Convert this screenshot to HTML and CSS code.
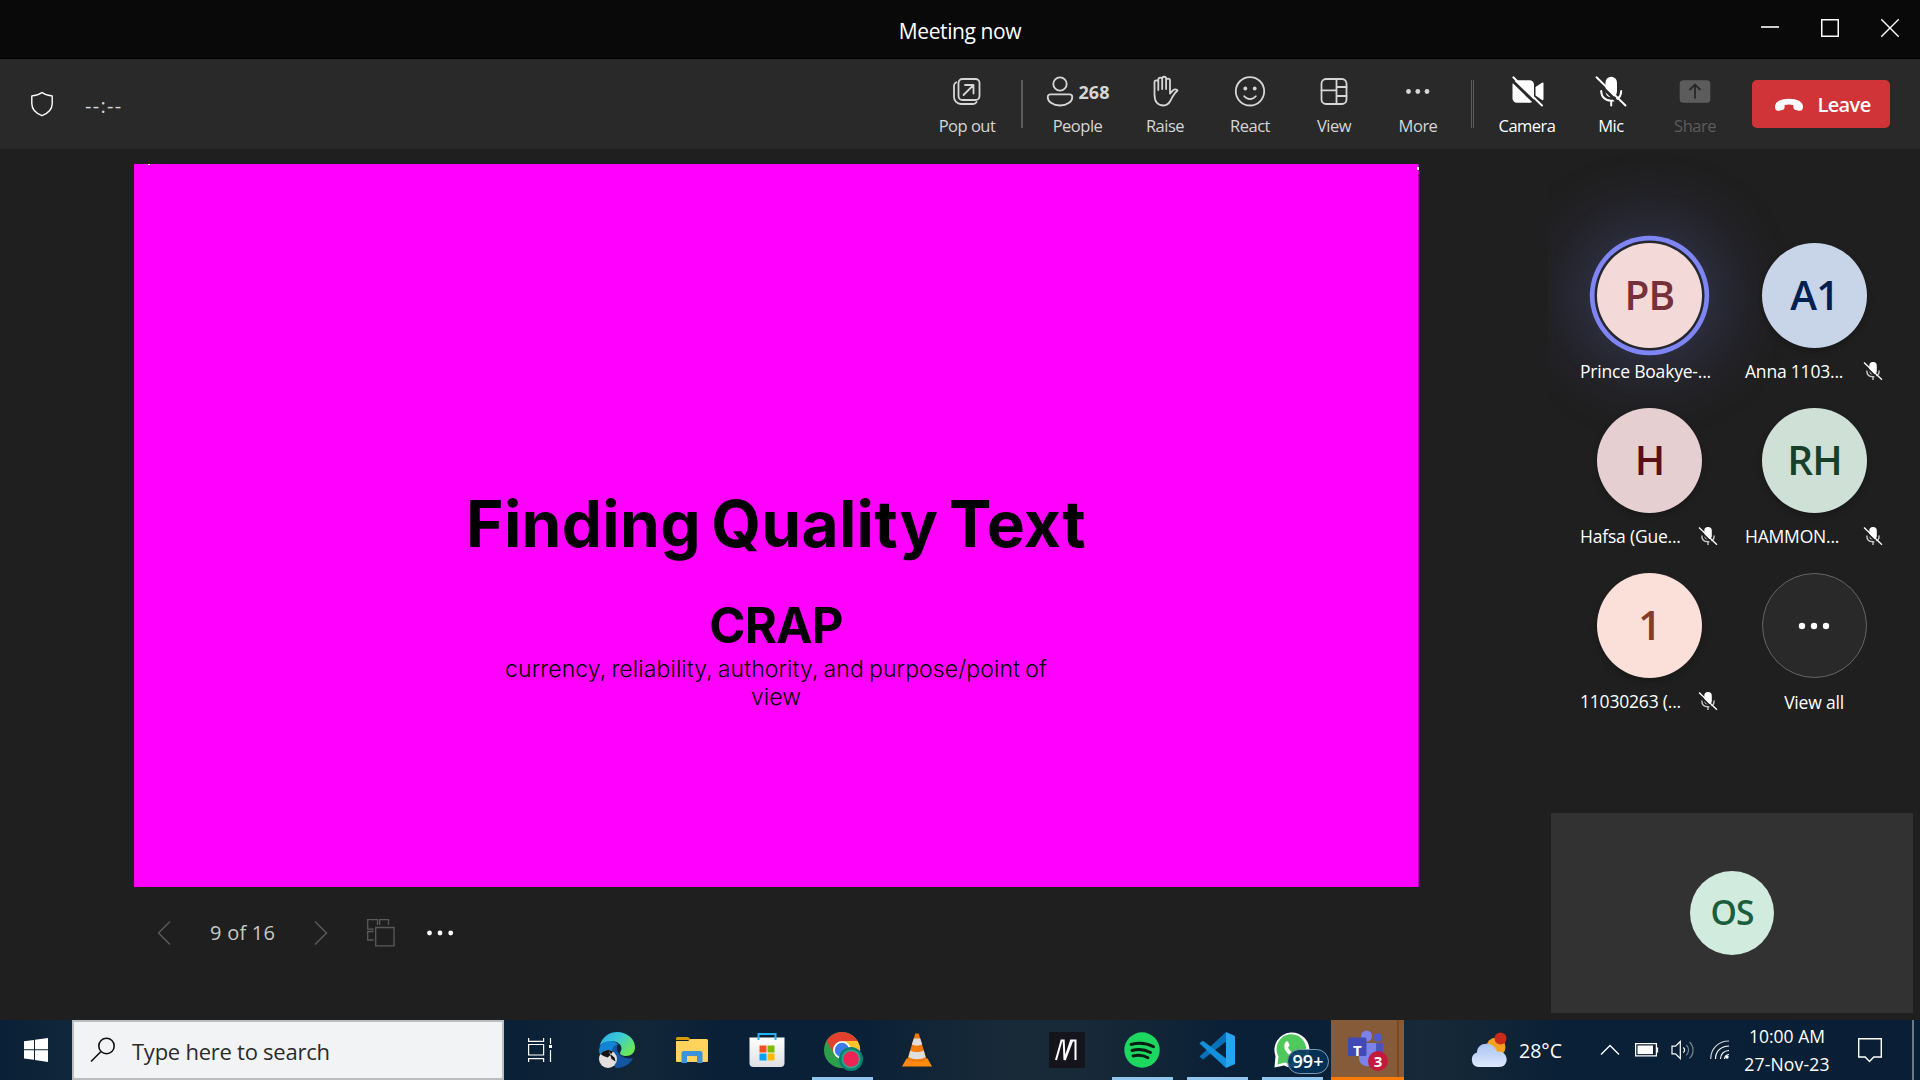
FILE: index.html
```html
<!DOCTYPE html>
<html lang="en">
<head>
<meta charset="utf-8">
<title>Meeting now</title>
<link rel="stylesheet" href="styles.css">
</head>
<body>
<header class="titlebar">
  <h1 class="title">Meeting now</h1>
  <div class="window-buttons">
    <svg width="18" height="18" viewBox="0 0 18 18"><path d="M0 8h18" stroke="#fff" stroke-width="1.6"/></svg>
    <svg width="18" height="18" viewBox="0 0 18 18"><path d="M.75.75h16.500v16.500H.75z" fill="none" stroke="#fff" stroke-width="1.5"/></svg>
    <svg width="18" height="18" viewBox="0 0 18 18"><path d="M.3.300l17.400 17.400M17.700.300L.3 17.700" stroke="#fff" stroke-width="1.4"/></svg>
  </div>
</header>

<nav class="toolbar">
  <svg class="shield" width="24" height="26" viewBox="0 0 24 26" fill="none" stroke="#fff" stroke-width="1.4" stroke-linejoin="round"><path d="M12 1.500C9 3.700 5.500 4.800 1.800 4.900v7.600c0 6 3.900 9.700 10.200 12.200 6.300-2.500 10.200-6.200 10.200-12.200V4.900C18.500 4.800 15 3.700 12 1.500z"/></svg>
  <span class="timer">--:--</span>
  <div class="tools">
    <div class="tool"><svg width="32" height="32" viewBox="0 0 32 32" class="line"><rect x="7.500" y="4" width="21" height="21" rx="4"/><path d="M5.200 7.200A4 4 0 0 0 3 10.500V22a7 7 0 0 0 7 7h12a4 4 0 0 0 3.600-2"/><path d="M12.500 20 22 10.500M14 10h8.500v8.500"/></svg><span>Pop out</span></div>
    <i class="divider"></i>
    <div class="tool people"><div class="row"><svg width="28" height="32" viewBox="0 0 28 32" class="line"><circle cx="14" cy="9" r="6.700"/><path d="M4.300 19.300h19.400a2.600 2.600 0 0 1 2.600 2.600c0 5-5.500 8.600-12.300 8.600S1.700 26.900 1.700 21.900a2.600 2.600 0 0 1 2.600-2.600z"/></svg><b>268</b></div><span>People</span></div>
    <div class="tool raise"><svg width="32" height="32" viewBox="0 0 32 32" class="line"><path d="M5.500 17V7.300a1.900 1.900 0 0 1 3.800 0V15M9.300 7V4.500a1.900 1.900 0 0 1 3.900 0V14M13.200 4.500V3.700a1.950 1.950 0 0 1 3.900 0V14M17.100 5.500a1.950 1.950 0 0 1 3.900 0V18.500l3.200-3.300c1.400-1.400 3.500-1.100 4.300.3-.9.800-2.600 2.500-4.500 5.500-2.300 3.700-3.500 9.500-9.500 9.500-5.800 0-9-3.700-9-11V16"/></svg><span>Raise</span></div>
    <div class="tool"><svg width="32" height="32" viewBox="0 0 32 32" class="line"><circle cx="16" cy="16.300" r="14.200"/><circle cx="11.300" cy="13.500" r="1.900" class="dot"/><circle cx="20.700" cy="13.500" r="1.900" class="dot"/><path d="M10.200 21.300c3 3.700 8.600 3.700 11.600 0"/></svg><span>React</span></div>
    <div class="tool"><svg width="32" height="32" viewBox="0 0 32 32" class="line"><rect x="3.500" y="4" width="25" height="25" rx="4.500"/><path d="M18.500 4v25M3.500 15.300h15M18.500 12h10M18.500 21h10"/></svg><span>View</span></div>
    <div class="tool"><svg width="32" height="32" viewBox="0 0 32 32" fill="#d6d6d6"><circle cx="6.500" cy="16.500" r="2.400"/><circle cx="15.800" cy="16.500" r="2.400"/><circle cx="25" cy="16.500" r="2.400"/></svg><span>More</span></div>
    <i class="divider double"></i>
    <div class="tool on"><svg width="34" height="32" viewBox="0 0 34 32"><rect x="2.500" y="5.200" width="21.500" height="22.500" rx="4.500" fill="#fff"/><path d="M25.500 12 32 7.800a1 1 0 0 1 1.500.8v15.500a1 1 0 0 1-1.500.800l-6.500-4.500z" fill="#fff"/><path d="M1 4.500 30.500 33" stroke="#292929" stroke-width="3"/><path d="M3.300 2.300 32 30.500" stroke="#fff" stroke-width="1.900" stroke-linecap="round"/></svg><span>Camera</span></div>
    <div class="tool on"><svg width="32" height="32" viewBox="0 0 32 32"><rect x="10.500" y="1.800" width="11.500" height="20.500" rx="5.700" fill="#fff"/><path d="M6.200 16c0 5.800 4 9.800 10 9.800s10-4 10-9.800M16.200 26v4.500" fill="none" stroke="#fff" stroke-width="2" stroke-linecap="round"/><path d="M0 5 29 33.500" stroke="#292929" stroke-width="3"/><path d="M1.500 2.300 30.500 30.500" stroke="#fff" stroke-width="1.900" stroke-linecap="round"/></svg><span>Mic</span></div>
    <div class="tool off"><svg width="32" height="32" viewBox="0 0 32 32"><rect x=".7" y="5.200" width="30.600" height="22.500" rx="3.500" fill="#5c5c5c"/><path d="M16 23.500V10M10.500 15 16 9.500l5.500 5.500" fill="none" stroke="#292929" stroke-width="1.800"/></svg><span>Share</span></div>
  </div>
  <button class="leave"><svg width="30" height="14" viewBox="0 0 30 14"><path d="M15 .8c8 0 14 2.700 14 8 0 3-1.500 4.400-4 3.900l-3.300-.7c-1.500-.3-2.200-1.300-2.300-3l-.1-2C17 6.200 13 6.200 10.700 7l-.1 2c-.1 1.700-.8 2.700-2.300 3l-3.300.7C2.500 13.200 1 11.800 1 8.800 1 3.500 7 .8 15 .8z" fill="#fff"/></svg>Leave</button>
</nav>

<main class="stage">
  <section class="presentation">
    <div class="slide">
      <h2>Finding Quality Text</h2>
      <h3>CRAP</h3>
      <p>currency, reliability, authority, and purpose/point of<br>view</p>
    </div>
    <div class="pager">
      <svg width="14" height="26" viewBox="0 0 14 26"><path d="M13 1.500 1.500 13 13 24.500" fill="none" stroke="#5a5a5a" stroke-width="1.500"/></svg>
      <span class="count">9 of 16</span>
      <svg width="14" height="26" viewBox="0 0 14 26"><path d="M1 1.500 12.500 13 1 24.500" fill="none" stroke="#5a5a5a" stroke-width="1.500"/></svg>
      <svg class="grid-icon" width="28" height="28" viewBox="0 0 28 28"><path d="M8.700 8.500H27v18.300H8.700zM6.500 21H.7v-8.500h5.800M10.500 6V.7H.7v9.500h6M12.700 6V.7h8.800V6" fill="none" stroke="#5a5a5a" stroke-width="1.300"/></svg>
      <svg width="28" height="8" viewBox="0 0 28 8" fill="#fff"><circle cx="3.500" cy="4" r="2.400"/><circle cx="14" cy="4" r="2.400"/><circle cx="24.700" cy="4" r="2.400"/></svg>
    </div>
  </section>

  <aside class="side">
    <div class="roster">
      <div class="person speaking"><div class="avatar pb">PB</div><div class="name">Prince Boakye-...</div></div>
      <div class="person"><div class="avatar a1">A1</div><div class="name">Anna 1103...<svg width="20" height="20" viewBox="0 0 20 20"><use href="#muted"/></svg></div></div>
      <div class="person"><div class="avatar h">H</div><div class="name">Hafsa (Gue...<svg width="20" height="20" viewBox="0 0 20 20"><use href="#muted"/></svg></div></div>
      <div class="person"><div class="avatar rh">RH</div><div class="name">HAMMON...<svg width="20" height="20" viewBox="0 0 20 20"><use href="#muted"/></svg></div></div>
      <div class="person"><div class="avatar one">1</div><div class="name">11030263 (...<svg width="20" height="20" viewBox="0 0 20 20"><use href="#muted"/></svg></div></div>
      <div class="person"><div class="avatar all"><svg width="32" height="8" viewBox="0 0 32 8" fill="#fff"><circle cx="4" cy="4" r="3.200"/><circle cx="16" cy="4" r="3.200"/><circle cx="28" cy="4" r="3.200"/></svg></div><div class="name center">View all</div></div>
    </div>
    <div class="self"><div class="avatar os">OS</div></div>
  </aside>
</main>

<footer class="taskbar">
  <div class="start"><svg width="24" height="24" viewBox="0 0 24 24" fill="#fff"><path d="M0 3.300 10 1.900v9.300H0zM11 1.700 24 0v11.200H11zM0 12.300h10v9.500L0 20.600zM11 12.300h13V24l-13-1.900z"/></svg></div>
  <div class="search"><svg width="26" height="26" viewBox="0 0 26 26" fill="none" stroke="#111" stroke-width="1.600"><circle cx="16.500" cy="9" r="7.700"/><path d="M11 14.500 1 24.500"/></svg><span>Type here to search</span></div>
  <div class="cell view"><svg width="25" height="24" viewBox="0 0 25 24" fill="none" stroke="#fff" stroke-width="1.200"><path d="M.6 6.500h15v10.500H.6zM.6 0v3.400h15V0M.6 24v-3.400h15V24M22.500 0v6M22.500 12v12"/><path d="M21 7h3v3h-3z" fill="#fff" stroke="none"/></svg></div>
  <div class="apps">
    <div class="cell"><svg width="36" height="36" viewBox="0 0 36 36"><defs><linearGradient id="eg" x1="0" y1="0" x2="1" y2=".6"><stop offset="0" stop-color="#2aa7e8"/><stop offset=".5" stop-color="#3bc9d8"/><stop offset="1" stop-color="#6be858"/></linearGradient></defs><path d="M0 18C1 8 13 6 19 12c-5 4-4 11 0 15C8 32 0 26 0 18z" fill="#1184d6"/><path d="M13 20c0-4 2-7 5.500-7.500-1.500 5 0 9 4 11.500 4 2.500 8 2.500 11.500 2.500C31 32 25 36 18 36c-5-1-5-9-5-16z" fill="#1455a3"/><path d="M.5 14C3.500 4 11 0 18 0c10 0 18 7 18 15 0 6-4 9-9 9-3 0-6-1-6-3 0-1 1.500-2 1.500-4.500C22.500 11.500 17 9 12 9 7 9 3 10.500.5 14z" fill="url(#eg)"/><circle cx="9" cy="27" r="9" fill="#e2e0de"/><path d="M1.500 22a9 9 0 0 1 12.500-2.500L11.500 23l-3 2.500-4-1.500zM10 19l2.500 8 4 2.500-1-4-3-2.500z" fill="#141414"/></svg></div>
    <div class="cell"><svg width="32" height="28" viewBox="0 0 32 28"><path d="M0 2.500A1.500 1.500 0 0 1 1.500 1H12l3.500 3H0z" fill="#d99a08"/><path d="M0 5h12l3-2h15.500A1.500 1.500 0 0 1 32 4.500V25a1 1 0 0 1-1 1H1a1 1 0 0 1-1-1z" fill="#ffd35c"/><path d="M5.500 27V17a2 2 0 0 1 2-2h17a2 2 0 0 1 2 2v10H21v-7H11v7z" fill="#3b93dc"/></svg></div>
    <div class="cell"><svg width="36" height="36" viewBox="0 0 36 36"><defs><linearGradient id="bag" x1="0" y1="0" x2="0" y2="1"><stop offset="0" stop-color="#fff"/><stop offset="1" stop-color="#dedfe2"/></linearGradient></defs><path d="M.5 5.500h35V31a4 4 0 0 1-4 4h-27a4 4 0 0 1-4-4z" fill="url(#bag)"/><path d="M9.500 8V2h17v6" fill="none" stroke="#26b3f3" stroke-width="2"/><path d="M10.500 13.500h7v7h-7z" fill="#f25022"/><path d="M18.500 13.500h7v7h-7z" fill="#7fba00"/><path d="M10.500 21.500h7v7h-7z" fill="#00a4ef"/><path d="M18.500 21.500h7v7h-7z" fill="#ffb900"/></svg></div>
    <div class="cell running chrome"><svg width="40" height="40" viewBox="0 0 40 40"><circle cx="18" cy="18" r="18" fill="#2d9f4c"/><path d="M2.500 9A18 18 0 0 1 33.600 9H18L10.500 22z" fill="#e4402f"/><path d="M33.600 9A18 18 0 0 1 18 36l8-13.500L18 9z" fill="#fbc52c"/><circle cx="18" cy="18" r="9" fill="#fff"/><circle cx="18" cy="18" r="7.200" fill="#3a7cec"/><circle cx="27" cy="27" r="12" fill="#08806f"/><circle cx="27" cy="27" r="9.500" fill="#32a58c"/><circle cx="27" cy="27" r="7.800" fill="#ee2554"/></svg></div>
    <div class="cell"><svg width="30" height="36" viewBox="0 0 30 36"><path d="M4.500 26.500h21L30 34.500H0z" fill="#fb8c10"/><path d="M13.300 1.500h3.400L24.500 27c-3 4-16 4-19 0z" fill="#f27a06"/><path d="M11.800 6.500h6.400l2 6c-3 1.500-7.400 1.500-10.400 0zM8.300 18.500c4 2 9.400 2 13.400 0l1.800 6.500c-4 3-13 3-17 0z" fill="#dedede"/></svg></div>
    <div class="cell"></div>
    <div class="cell"><svg width="36" height="36" viewBox="0 0 36 36"><path d="M0 0h36v36H0z" fill="#15141c"/><path d="M7 28 12.500 8.500h2.200L15.500 28 22 8.500h4.500V28" fill="none" stroke="#fff" stroke-width="2"/><path d="M16 28 23.500 8.500" stroke="#fff" stroke-width="1.600"/></svg></div>
    <div class="cell running"><svg width="36" height="36" viewBox="0 0 36 36"><circle cx="18" cy="18" r="17.700" fill="#1ed760"/><path d="M7 12.500c7.500-2 16-1.200 22.500 2.300M8 18.500c6.500-1.800 13-1 18.500 2M9 24c5.500-1.400 10.500-.8 15 1.700" fill="none" stroke="#071b12" stroke-width="2.900" stroke-linecap="round"/></svg></div>
    <div class="cell running"><svg width="36" height="36" viewBox="0 0 36 36"><path d="M.5 24.500 4 27.500 27 9.500V0z" fill="#0872b8"/><path d="M.3 11.200 4 8.700 27 26.500V36z" fill="#1290dd"/><path d="M27 0l8 3.500a2 2 0 0 1 1 1.800v25.400a2 2 0 0 1-1 1.800L27 36z" fill="#27a5ee"/></svg></div>
    <div class="cell running whatsapp"><svg width="36" height="36" viewBox="0 0 36 36"><path d="M.5 35.500 1.500 24A17.500 17.500 0 1 1 10 33.500z" fill="#fff"/><path d="M3.500 32.500 4.500 24.500a14.800 14.800 0 1 1 6.500 6z" fill="#4fc85c"/><path d="M12 9.500c1.500-1 2.500 0 3.500 3.500.3 1-1.500 2-1.500 2.800 2 3.500 4 5 7 6.200 1 0 2-2.500 3-2.200 3.500 1.500 4.500 2.300 3 4.500-2 2.500-6 2.500-10.500-.5-5-3.500-8.500-9.500-4.500-14.300z" fill="#fff"/></svg><em class="pill">99+</em></div>
    <div class="cell teams"><svg width="40" height="38" viewBox="0 0 40 38"><circle cx="30" cy="7.500" r="4.300" fill="#5059c9"/><path d="M26 13h9v11a6 6 0 0 1-9 0z" fill="#4b53bc"/><circle cx="18.500" cy="6" r="5.500" fill="#7b83eb"/><path d="M11 13h17v12a8.500 8.500 0 0 1-17 5z" fill="#7b83eb"/><rect y="7.500" width="18.500" height="18.500" rx="1.500" fill="#4049b4"/></svg><span class="tee">T</span><em class="count-badge">3</em></div>
  </div>
  <div class="tray">
    <svg class="weather" width="37" height="36" viewBox="0 0 37 36"><defs><linearGradient id="cl" x1="0" y1="0" x2="0" y2="1"><stop offset="0" stop-color="#a9c5f5"/><stop offset=".5" stop-color="#c3d6f8"/><stop offset="1" stop-color="#dfe9fb"/></linearGradient></defs><circle cx="26" cy="15" r="9.500" fill="#f6a021"/><path d="M8 35a7.500 7.500 0 0 1-1-14.500C7 9 24 9 27 19.500c12-1.500 13 15.500 2 15.500z" fill="url(#cl)"/><circle cx="30.500" cy="6.500" r="6" fill="#c92a1c"/></svg>
    <span class="temp">28°C</span>
    <svg class="caret" width="20" height="12" viewBox="0 0 20 12"><path d="M1 10.500 10 1.500l9 9" fill="none" stroke="#fff" stroke-width="1.400"/></svg>
    <svg class="battery" width="24" height="14" viewBox="0 0 24 14"><path d="M.6.600h20.800v12.300H.6zM22.500 4.500v5" fill="none" stroke="#fff" stroke-width="1.300"/><path d="M2.500 2.500H18v8.600H2.500z" fill="#fff"/></svg>
    <svg class="speaker" width="24" height="20" viewBox="0 0 24 20" fill="none" stroke="#fff" stroke-width="1.200"><path d="M1 6.200h3.500L9.300 1.500v17L4.500 13.800H1z"/><path d="M12.300 7.500c1.500 1.500 1.500 3.700 0 5.200"/><path d="M15.300 5c3 2.800 3 7.300 0 10.200M18.500 2c4.700 4.500 4.700 11.800 0 16.300" opacity=".45"/></svg>
    <svg class="wifi" width="20" height="20" viewBox="0 0 20 20" fill="none" stroke="#fff" stroke-width="1.200"><path d="M.7 19C.7 8.500 8.500 1 19 1" opacity=".8"/><path d="M5.500 19C5.500 11.500 11 6 19 6M10.500 19c0-5 3.500-8.500 8.500-8.500M14.500 19c.2-2.500 2-4.300 4.500-4.500"/><circle cx="17" cy="17" r="1.700" fill="#fff" stroke="none"/></svg>
    <div class="clock"><span>10:00 AM</span><span class="date">27-Nov-23</span></div>
    <svg class="notice" width="24" height="25" viewBox="0 0 24 25"><path d="M.7.7h22.600v18.300h-7.500l-4.300 4.500L7.200 19H.7z" fill="none" stroke="#fff" stroke-width="1.400"/></svg>
    <i class="desktop"></i>
  </div>
</footer>

<svg width="0" height="0" class="defs"><defs><g id="muted"><rect x="6.300" y="1" width="7.500" height="12.500" rx="3.700" fill="#fff"/><path d="M3.800 9.500c0 3.800 2.500 6.200 6.200 6.200s6.200-2.400 6.200-6.200M10 16v3" fill="none" stroke="#c8c8c8" stroke-width="1.400"/><path d="M0 3 17 20" stroke="#1f1f1f" stroke-width="1.800"/><path d="M1 1.500 19 18.800" stroke="#fff" stroke-width="1.300"/></g></defs></svg>
</body>
</html>
```
FILE: styles.css
```css
* { box-sizing: border-box; }
body {
  margin: 0;
  width: 1920px;
  height: 1080px;
  display: flex;
  flex-direction: column;
  overflow: hidden;
  background: #1f1f1f;
  color: #fff;
  font-family: "Open Sans", "Noto Sans", sans-serif;
}
svg { display: block; flex: none; }
.defs { position: absolute; }

.titlebar {
  height: 59px;
  flex: none;
  display: grid;
  grid-template-columns: 1fr auto 1fr;
  align-items: center;
  background: #090909;
  border-bottom: 1px solid #000;
}
.title {
  grid-column: 2;
  margin: 3px 0 0;
  font-size: 21px;
  font-weight: 400;
  line-height: 28px;
  letter-spacing: -0.4px;
}
.window-buttons {
  display: flex;
  justify-content: flex-end;
  gap: 42px;
  padding: 0 21px 2px 0;
}

.toolbar {
  height: 90px;
  flex: none;
  display: flex;
  align-items: center;
  padding: 0 30px;
  background: #292929;
  color: #d6d6d6;
}
.timer { margin: 2px 0 0 31px; font-size: 20px; letter-spacing: 1.300px; }
.tools { display: flex; margin-left: auto; align-items: center; }
.tool {
  width: 84px;
  height: 90px;
  padding-top: 16px;
  display: flex;
  flex-direction: column;
  align-items: center;
  font-size: 16.500px;
  line-height: 22px;
  letter-spacing: -0.5px;
  gap: 8px;
}
.people { width: 89px; }
.raise { width: 86px; }
.people .row { display: flex; align-items: center; gap: 5px; height: 32px; }
.people b { padding-top: 2px; font-size: 18px; letter-spacing: 0; }
.line { fill: none; stroke: #d6d6d6; stroke-width: 1.800; stroke-linecap: round; stroke-linejoin: round; }
.line .dot { fill: #d6d6d6; stroke: none; }
.on { color: #fff; }
.off { color: #5c5c5c; }
.divider { width: 2px; height: 48px; margin: 0 10px 0 12px; background: #5c5c5c; }
.double { width: 3px; margin: 0 11px; background: none; border: solid #5c5c5c; border-width: 0 1px; }
.leave {
  width: 138px;
  height: 48px;
  margin-left: 15px;
  padding: 1px 0 0 3px;
  display: flex;
  align-items: center;
  justify-content: center;
  gap: 13px;
  border: 0;
  border-radius: 5px;
  background: #d13438;
  color: #fff;
  font: 600 20px "Open Sans", sans-serif;
  letter-spacing: -0.6px;
}

.stage { height: 871px; flex: none; display: flex; }
.presentation { width: 1548px; padding: 15px 0 0 134px; }
.slide {
  position: relative;
  width: 1285px;
  height: 723px;
  padding-top: 324px;
  background: #f0f;
  border-right: 1px solid #b400b4;
  color: #000;
  font-family: Inter, sans-serif;
  text-align: center;
}
.slide::before, .slide::after { content: ""; position: absolute; background: #fff; }
.slide::before { left: 14px; top: 0; width: 2px; height: 1px; }
.slide::after { right: -1px; top: 3px; width: 2px; height: 3px; }
.slide h2 { margin: 0; font-size: 64px; line-height: 72px; font-weight: 700; word-spacing: -5px; letter-spacing: 0.300px; }
.slide h3 { margin: 40px 0 0; font-size: 49px; line-height: 52px; font-weight: 700; letter-spacing: -0.8px; }
.slide p { margin: 4px 0 0; font-size: 23px; line-height: 27.500px; font-weight: 300; word-spacing: -1.500px; letter-spacing: 0.100px; }
.pager { display: flex; align-items: center; padding: 32px 0 0 23px; color: #c8c8c8; font-size: 20px; line-height: 28px; }
.count { margin: 0 39px; letter-spacing: 0.250px; }
.grid-icon { margin: 0 31px 0 39px; }

.side { width: 372px; padding: 0 7px 7px 3px; display: flex; flex-direction: column; justify-content: space-between; overflow: hidden; }
.roster { padding: 94px 0 0 19px; display: grid; grid-template-columns: 165px 165px; grid-auto-rows: 165px; }
.person { padding-left: 10px; }
.avatar {
  width: 105px;
  height: 105px;
  margin-left: 17px;
  padding-bottom: 2px;
  border-radius: 50%;
  display: flex;
  align-items: center;
  justify-content: center;
  font-size: 40.500px;
  font-weight: 600;
  letter-spacing: -0.8px;
  box-shadow: 0 3px 6px rgba(0, 0, 0, .25);
}
.speaking .avatar { box-shadow: 0 0 0 2.500px #26262e, 0 0 0 7.200px #7f85f5, 0 0 80px 14px rgba(127, 133, 245, .3); }
.pb { background: #f4d9d9; color: #76303a; }
.a1 { background: #c8d4e8; color: #002050; }
.h { background: #e6cfd1; color: #561018; }
.rh { background: #cfe1d6; color: #183f29; }
.one { background: #fbdfd9; color: #853a2c; }
.all { padding: 0 1px 0 0; background: #292929; border: 1px solid #666; box-shadow: none; }
.name { position: relative; display: flex; align-items: center; justify-content: space-between; width: 138px; height: 24px; margin-top: 11px; font-size: 17.500px; line-height: 24px; letter-spacing: -0.200px; white-space: nowrap; }
.name.center { justify-content: center; margin-top: 12px; }
.self { width: 362px; height: 200px; display: flex; align-items: center; justify-content: center; background: #323232; }
.os { width: 84px; height: 84px; margin: 0; background: #d2ebdf; color: #1b5e3b; font-size: 33.500px; box-shadow: none; }

.taskbar {
  height: 60px;
  flex: none;
  display: flex;
  background: linear-gradient(90deg, #0a2036 0, #10263a 70px, #0a2036 510px, #122638 640px, #0a2036 720px, #0a2036 860px, #182a38 1000px, #182a38 1080px, #0a2036 1230px, #0a2036 1320px, #182a38 1420px, #0a2036 1560px, #0a2036 1700px, #0a1f35 1920px);
}
.start { width: 72px; display: flex; align-items: center; padding-left: 24px; }
.search {
  width: 432px;
  display: flex;
  align-items: center;
  gap: 16px;
  padding-left: 16px;
  border: 2px solid #bbbcbe;
  background: #f1f3f4;
  color: #2b2b2b;
  font-size: 22px;
  letter-spacing: -0.250px;
}
.search span { padding-top: 2px; }
.cell { position: relative; width: 75px; padding-right: 2px; display: flex; align-items: center; justify-content: center; }
.view { width: 76px; justify-content: flex-start; padding-left: 24px; }
.chrome { padding: 0 0 0 2px; }
.chrome svg { margin-top: 4px; }
.apps { display: flex; width: 825px; }
.running::after { content: ""; position: absolute; left: 7px; bottom: 0; width: 61px; height: 3px; background: #91c7ef; }
.pill {
  position: absolute;
  left: 32px;
  top: 29px;
  width: 42px;
  height: 25px;
  border: 1px solid #7f9bb0;
  border-radius: 13px;
  background: rgba(0, 50, 90, .9);
  font: 600 18px/23px "Open Sans", sans-serif;
  text-align: center;
  z-index: 1;
}
.teams { width: 73px; margin: 0 1px; padding: 0; background: linear-gradient(90deg, #855b39 66px, #7b4a20 66px, #7b4a20 68px, #8a5a34 68px); border-bottom: 3px solid #ff7a00; }
.tee { position: absolute; left: 22px; top: 18px; font: 700 15px/24px "Open Sans", sans-serif; }
.count-badge { position: absolute; left: 37px; top: 31px; width: 20px; height: 20px; border-radius: 50%; background: #c4183c; font: 700 15px/20px "Open Sans", sans-serif; text-align: center; }
.tray { flex: 1; display: flex; align-items: center; }
.weather { margin-left: 65px; }
.temp { margin: 1px 0 0 12px; width: 43px; font-size: 19.500px; white-space: nowrap; }
.caret { margin-left: 38px; }
.battery { margin-left: 15px; }
.speaker { margin-left: 12px; }
.wifi { margin-left: 15px; }
.clock { display: flex; flex-direction: column; align-items: center; width: 100px; margin-left: 7px; font-size: 17.500px; line-height: 28px; }
.date { letter-spacing: 0.200px; }
.notice { margin-left: 21px; }
.desktop { width: 8px; height: 60px; margin-left: auto; border-left: 2px solid #6b7987; }
```
